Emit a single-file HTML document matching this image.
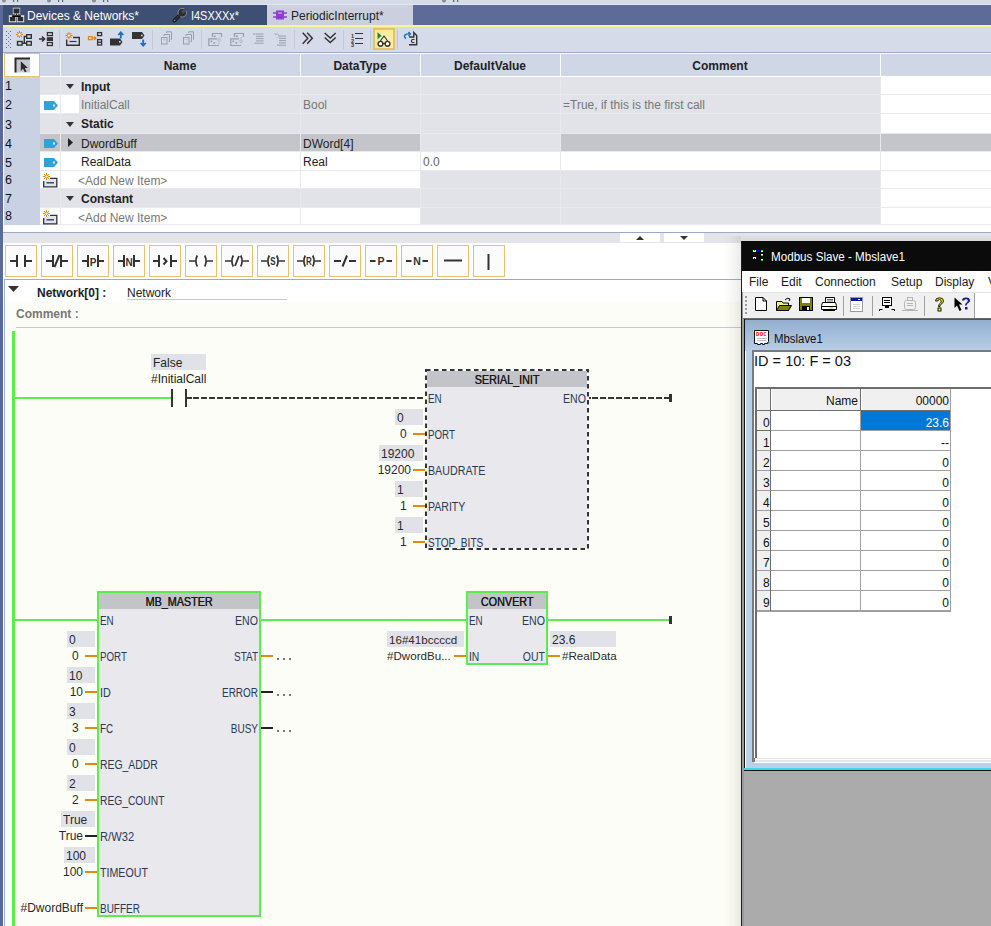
<!DOCTYPE html>
<html><head><meta charset="utf-8">
<style>
*{margin:0;padding:0;box-sizing:border-box}
html,body{width:991px;height:926px;overflow:hidden;background:#fdfdf7;font-family:"Liberation Sans",sans-serif;font-size:12px;color:#222;position:relative}
.a{position:absolute}
.t{position:absolute;white-space:nowrap}
svg{position:absolute;overflow:visible}
</style></head><body>
<div class="a" style="left:0px;top:0px;width:991px;height:5px;background:#d6dbe8;"></div>
<div class="a" style="left:3px;top:5px;width:988px;height:20px;background:#5d6b98;"></div>
<div class="a" style="left:3px;top:5px;width:264px;height:20px;background:#3d5073;"></div>
<div class="a" style="left:267px;top:5px;width:146px;height:20px;background:#ccd0de;"></div>
<div class="a" style="left:3px;top:25px;width:988px;height:2px;background:#fbf29a;"></div>
<div class="t" style="left:27px;top:8.84px;font-size:12px;line-height:14px;color:#fff;">Devices &amp; Networks*</div>
<div class="t" style="left:191px;top:8.84px;font-size:12px;line-height:14px;color:#fff;transform:scaleX(0.91);transform-origin:left center;">I4SXXXx*</div>
<div class="t" style="left:291px;top:8.84px;font-size:12px;line-height:14px;color:#222;">PeriodicInterrupt*</div>
<div class="a" style="left:3px;top:27px;width:988px;height:25px;background:#d6dbe9;"></div>
<div class="a" style="left:3px;top:52px;width:988px;height:1px;background:#9ea8c6;"></div>
<svg style="left:2px;top:0px" width="20" height="3" viewBox="0 0 20 3"><ellipse cx="2" cy="0.8" rx="2" ry="1.6" fill="#8a8d95"/><rect x="11" y="0" width="1.2" height="2" fill="#5a6480"/><rect x="15" y="0" width="1.2" height="2" fill="#5a6480"/></svg>
<svg style="left:47px;top:0px" width="20" height="3" viewBox="0 0 20 3"><ellipse cx="2" cy="0.8" rx="2" ry="1.6" fill="#8a8d95"/><rect x="11" y="0" width="1.2" height="2" fill="#5a6480"/><rect x="15" y="0" width="1.2" height="2" fill="#5a6480"/></svg>
<svg style="left:92px;top:0px" width="20" height="3" viewBox="0 0 20 3"><ellipse cx="2" cy="0.8" rx="2" ry="1.6" fill="#8a8d95"/><rect x="11" y="0" width="1.2" height="2" fill="#5a6480"/><rect x="15" y="0" width="1.2" height="2" fill="#5a6480"/></svg>
<svg style="left:442px;top:0px" width="20" height="3" viewBox="0 0 20 3"><ellipse cx="2" cy="0.8" rx="2" ry="1.6" fill="#8a8d95"/><rect x="11" y="0" width="1.2" height="2" fill="#5a6480"/><rect x="15" y="0" width="1.2" height="2" fill="#5a6480"/></svg>
<div class="a" style="left:0px;top:4px;width:991px;height:1px;background:#e2e6f0;"></div>
<svg style="left:9px;top:8px" width="15" height="14" viewBox="0 0 15 14"><path d="M4.5 0.5H10.5V5.5H8V8H14.5V13.5H8.5V8.5H6.5V13.5H0.5V8H7V5.5H4.5Z" fill="none" stroke="#e8eaf2" stroke-width="1.3"/><rect x="4.5" y="0.5" width="6" height="5" fill="#2d2d2d"/><rect x="0.8" y="9" width="5.5" height="4.3" fill="#2d2d2d"/><rect x="8.7" y="9" width="5.5" height="4.3" fill="#2d2d2d"/><path d="M7.5 5.5V8M3.5 9V7.5H11.5V9" stroke="#2d2d2d" stroke-width="1"/></svg>
<svg style="left:172px;top:8px" width="15" height="15" viewBox="0 0 15 15"><path d="M2.3 12.7L8 7" stroke="#111" stroke-width="3.6" stroke-linecap="round"/><circle cx="10.3" cy="4.7" r="4.3" fill="#2e2e2e" stroke="#bbb" stroke-width="0.6"/><path d="M2.3 12.7L8 7" stroke="#2e2e2e" stroke-width="2.6" stroke-linecap="round"/><path d="M10.3 4.7L14.5 0.5" stroke="#3d5073" stroke-width="3"/><circle cx="2.6" cy="12.4" r="0.7" fill="#888"/></svg>
<svg style="left:273px;top:10px" width="14" height="10" viewBox="0 0 14 10"><rect x="3" y="0.5" width="8" height="9" fill="#8a3fd1"/><path d="M0 3H3M0 7H3M11 3H14M11 7H14" stroke="#8a3fd1" stroke-width="1.5"/><path d="M5 3H9" stroke="#d8c0f2" stroke-width="1"/></svg>
<div class="a" style="left:6px;top:31px;width:1px;height:1px;background:#5d6f90;"></div>
<div class="a" style="left:10px;top:31px;width:1px;height:1px;background:#5d6f90;"></div>
<div class="a" style="left:6px;top:35px;width:1px;height:1px;background:#5d6f90;"></div>
<div class="a" style="left:10px;top:35px;width:1px;height:1px;background:#5d6f90;"></div>
<div class="a" style="left:6px;top:39px;width:1px;height:1px;background:#5d6f90;"></div>
<div class="a" style="left:10px;top:39px;width:1px;height:1px;background:#5d6f90;"></div>
<div class="a" style="left:6px;top:43px;width:1px;height:1px;background:#5d6f90;"></div>
<div class="a" style="left:10px;top:43px;width:1px;height:1px;background:#5d6f90;"></div>
<div class="a" style="left:6px;top:47px;width:1px;height:1px;background:#5d6f90;"></div>
<div class="a" style="left:10px;top:47px;width:1px;height:1px;background:#5d6f90;"></div>
<div class="a" style="left:8px;top:33px;width:1px;height:1px;background:#5d6f90;"></div>
<div class="a" style="left:8px;top:37px;width:1px;height:1px;background:#5d6f90;"></div>
<div class="a" style="left:8px;top:41px;width:1px;height:1px;background:#5d6f90;"></div>
<div class="a" style="left:8px;top:45px;width:1px;height:1px;background:#5d6f90;"></div>
<svg style="left:15px;top:31px" width="18" height="16" viewBox="0 0 18 16"><g stroke="#d9870f" stroke-width="1"><path d="M4.5 0.0V7.0M1.0 3.5H8.0M2.0 1.0L7.0 6.0M7.0 1.0L2.0 6.0"/></g><circle cx="4.5" cy="3.5" r="1.7" fill="#fff" stroke="#d9870f" stroke-width="1"/><g fill="none" stroke="#333" stroke-width="1.4"><rect x="11.7" y="3.7" width="4.6" height="3.6"/><rect x="2.5" y="10.5" width="4.6" height="3.6"/><rect x="11.7" y="10.5" width="4.6" height="3.6"/><path d="M7 12.3H9.3V5.5H11.7M9.3 12.3H11.7"/></g></svg>
<svg style="left:38px;top:31px" width="16" height="16" viewBox="0 0 16 16"><path d="M1 8H6M4 5.5L6.5 8L4 10.5" fill="none" stroke="#333" stroke-width="1.6"/><g fill="none" stroke="#333" stroke-width="1.3"><rect x="9.4" y="1.6" width="5" height="3"/><rect x="9.4" y="11.5" width="5" height="3"/></g><rect x="8.8" y="6.2" width="6.2" height="3.8" fill="#333"/></svg>
<div class="a" style="left:59px;top:30px;width:1px;height:19px;background:#c2c8d8;"></div>
<svg style="left:65px;top:31px" width="16" height="16" viewBox="0 0 16 16"><g stroke="#d9870f" stroke-width="1"><path d="M4 1.0V8.0M0.5 4.5H7.5M1.5 2.0L6.5 7.0M6.5 2.0L1.5 7.0"/></g><circle cx="4" cy="4.5" r="1.7" fill="#fff" stroke="#d9870f" stroke-width="1"/><path d="M8 6.5H14.3V14.3H1.7V8.5" fill="none" stroke="#333" stroke-width="1.4"/><path d="M4.5 10.5H11.5" stroke="#333" stroke-width="1.2"/></svg>
<svg style="left:87px;top:31px" width="16" height="16" viewBox="0 0 16 16"><rect x="1.5" y="5.7" width="3.6" height="3" fill="none" stroke="#d9870f" stroke-width="1.2"/><path d="M5 7.2H8M7 5.5L9 7.2L7 9" fill="none" stroke="#d9870f" stroke-width="1.2"/><g fill="none" stroke="#333" stroke-width="1.3"><rect x="10.6" y="1.6" width="4" height="3"/><rect x="10.6" y="8.6" width="4" height="5.4"/><path d="M10.6 11.3H14.6"/></g></svg>
<svg style="left:109px;top:31px" width="17" height="16" viewBox="0 0 17 16"><path d="M1 7.5H11L13.5 11L11 14.5H1Z" fill="#333"/><rect x="10" y="10" width="1.6" height="1.6" fill="#ddd"/><path d="M11.8 7.5V1.5M9.3 4L11.8 1.3L14.3 4" fill="none" stroke="#1d6fc0" stroke-width="1.8"/></svg>
<svg style="left:131px;top:31px" width="17" height="16" viewBox="0 0 17 16"><path d="M1 1H11L13.5 4.5L11 8H1Z" fill="#333"/><rect x="10" y="3.7" width="1.6" height="1.6" fill="#ddd"/><path d="M12.2 8.5V14.5M9.7 12L12.2 14.7L14.7 12" fill="none" stroke="#1d6fc0" stroke-width="1.8"/></svg>
<div class="a" style="left:152px;top:30px;width:1px;height:19px;background:#c2c8d8;"></div>
<svg style="left:160px;top:31px" width="13" height="14" viewBox="0 0 13 14"><g fill="none" stroke="#9a9ea8" stroke-width="1"><rect x="1.5" y="6.5" width="5.5" height="6.5"/><path d="M4 5V3.5H9.5V10.5H8.5M6.5 2V0.8H11.5V8.5H11"/></g><path d="M4.25 7V10M2.75 8.5H5.75" stroke="#c0c3ca" stroke-width="1"/></svg>
<svg style="left:182px;top:31px" width="13" height="14" viewBox="0 0 13 14"><g fill="none" stroke="#9a9ea8" stroke-width="1"><rect x="1.5" y="6.5" width="5.5" height="6.5"/><path d="M4 5V3.5H9.5V10.5H8.5M6.5 2V0.8H11.5V8.5H11"/></g><path d="M2.75 8.5H5.75" stroke="#c0c3ca" stroke-width="1"/></svg>
<div class="a" style="left:201px;top:30px;width:1px;height:19px;background:#c2c8d8;"></div>
<svg style="left:208px;top:32px" width="15" height="14" viewBox="0 0 15 14"><g fill="none" stroke="#9a9ea8" stroke-width="1.2"><path d="M4.5 5V1.5H13.5V5M11 13.5H0.8V6.8H9"/><path d="M4.5 5V1.5"/></g><rect x="6" y="3.5" width="1.7" height="1.7" fill="#9a9ea8"/><rect x="2.5" y="8.5" width="1.7" height="1.7" fill="#9a9ea8"/><rect x="5.5" y="10" width="1.7" height="1.7" fill="#9a9ea8"/><path d="M11 12V6.5M9 8.5L11 6.2L13 8.5" fill="none" stroke="#c2c5cc" stroke-width="1.6"/></svg>
<svg style="left:230px;top:32px" width="15" height="14" viewBox="0 0 15 14"><g fill="none" stroke="#9a9ea8" stroke-width="1.2"><path d="M4.5 5V1.5H13.5V5M11 13.5H0.8V6.8H9"/><path d="M4.5 5V1.5"/></g><rect x="6" y="3.5" width="1.7" height="1.7" fill="#9a9ea8"/><rect x="2.5" y="8.5" width="1.7" height="1.7" fill="#9a9ea8"/><rect x="5.5" y="10" width="1.7" height="1.7" fill="#9a9ea8"/><path d="M11 5V10.5M9 8.5L11 10.8L13 8.5" fill="none" stroke="#c2c5cc" stroke-width="1.6"/></svg>
<svg style="left:253px;top:33px" width="12" height="13" viewBox="0 0 12 13"><path d="M0 1H2.5M3 1H10.5M3 3.3H10.5M3 5.6H10.5M3 7.9H10.5M1.5 10.2H10.5" stroke="#9a9ea8" stroke-width="1"/></svg>
<svg style="left:274px;top:33px" width="13" height="14" viewBox="0 0 13 14"><path d="M3 5.5Q5.5 3.5 4.5 1.5Q3 0 1 1.5M1 1.5L0.8 0M1 1.5L2.5 1.8" fill="none" stroke="#b0b3ba" stroke-width="1"/><path d="M5 3H12M5 5.3H12M5 7.6H12M5 9.9H12M3 12.2H12" stroke="#9a9ea8" stroke-width="1"/></svg>
<div class="a" style="left:294px;top:30px;width:1px;height:19px;background:#c2c8d8;"></div>
<svg style="left:302px;top:32px" width="12" height="13" viewBox="0 0 12 13"><path d="M0.7 0.7L5.8 6.2L0.7 11.7M5.2 0.7L10.3 6.2L5.2 11.7" fill="none" stroke="#333" stroke-width="1.5"/></svg>
<svg style="left:324px;top:32px" width="13" height="13" viewBox="0 0 13 13"><path d="M0.7 1L6.2 6L11.7 1M0.7 5.5L6.2 10.5L11.7 5.5" fill="none" stroke="#333" stroke-width="1.5"/></svg>
<div class="a" style="left:343px;top:30px;width:1px;height:19px;background:#c2c8d8;"></div>
<svg style="left:350px;top:32px" width="14" height="15" viewBox="0 0 14 15"><text x="2.5" y="5.5" font-size="5.5" font-weight="bold" text-anchor="middle" fill="#333" font-family="Liberation Sans">1</text><text x="2.5" y="10.5" font-size="5.5" font-weight="bold" text-anchor="middle" fill="#333" font-family="Liberation Sans">2</text><text x="2.5" y="15" font-size="5.5" font-weight="bold" text-anchor="middle" fill="#333" font-family="Liberation Sans">3</text><path d="M5 1.5H13M5 6.5H13M5 11.5H13" stroke="#333" stroke-width="1.2"/></svg>
<div class="a" style="left:370px;top:30px;width:1px;height:19px;background:#c2c8d8;"></div>
<div class="a" style="left:373px;top:28px;width:22px;height:22px;background:#fdeb9e;border:2px solid #e6c261"></div>
<svg style="left:376px;top:31px" width="16" height="16" viewBox="0 0 16 16"><path d="M1.5 1V8.5L6 4.75Z" fill="#1f8a2a"/><path d="M1.5 1L6 4.75L1.5 8.5" fill="none" stroke="#fff" stroke-width=".6" opacity=".6"/><path d="M2.5 12.5L8 4.5L13.5 12.5" fill="none" stroke="#fff" stroke-width="2.2"/><path d="M2.5 12.5L8 5L13.5 12.5" fill="none" stroke="#333" stroke-width="1.2"/><circle cx="4.5" cy="12.8" r="2.4" fill="#fff" stroke="#333" stroke-width="1.4"/><circle cx="11.5" cy="12.8" r="2.4" fill="#fff" stroke="#333" stroke-width="1.4"/><path d="M6.9 12.5H9.1" stroke="#333" stroke-width="1.2"/></svg>
<div class="a" style="left:397px;top:30px;width:1px;height:19px;background:#c2c8d8;"></div>
<svg style="left:403px;top:31px" width="15" height="15" viewBox="0 0 15 15"><path d="M6 13.7H13.7V4.5L10.8 1.5V6H6" fill="none" stroke="#333" stroke-width="1.4"/><path d="M11.5 8.5H9.5Q8.5 8.5 8.5 10Q8.5 11.5 9.5 11.5H11.5" fill="none" stroke="#333" stroke-width="1.2"/><path d="M3 7.5Q0.5 6 2 4Q3.5 2.5 7 3M5.5 1L7.3 3L5.5 5" fill="none" stroke="#1d6fc0" stroke-width="1.5"/></svg>
<div class="a" style="left:3px;top:53px;width:988px;height:179px;background:#ffffff;"></div>
<div class="a" style="left:40px;top:77px;width:951px;height:148px;background:#e8e9ee;"></div>
<div class="a" style="left:4px;top:53px;width:36px;height:24px;background:#ffffff;border:1px solid #e8c36a"></div>
<div class="a" style="left:40px;top:54px;width:20px;height:22px;background:#cfd6e6;"></div>
<div class="a" style="left:61px;top:54px;width:239px;height:22px;background:#cfd6e6;"></div>
<div class="a" style="left:301px;top:54px;width:119px;height:22px;background:#cfd6e6;"></div>
<div class="a" style="left:421px;top:54px;width:139px;height:22px;background:#cfd6e6;"></div>
<div class="a" style="left:561px;top:54px;width:319px;height:22px;background:#cfd6e6;"></div>
<div class="a" style="left:881px;top:54px;width:110px;height:22px;background:#cfd6e6;"></div>
<svg style="left:14px;top:57px" width="17" height="16" viewBox="0 0 17 16"><rect x="2" y="2" width="14" height="13.5" fill="#c5c8d2"/><path d="M1.5 15.5V1.5H16" fill="none" stroke="#2a2a2a" stroke-width="2"/><path d="M6.8 4.3L6.8 14L9 11.8L10.9 15.2L12.6 14.4L10.8 11H14Z" fill="#2a2a2a"/></svg>
<div class="t" style="left:-20px;width:400px;text-align:center;top:58.84px;font-size:12px;line-height:14px;color:#222;font-weight:bold;">Name</div>
<div class="t" style="left:160px;width:400px;text-align:center;top:58.84px;font-size:12px;line-height:14px;color:#222;font-weight:bold;">DataType</div>
<div class="t" style="left:290px;width:400px;text-align:center;top:58.84px;font-size:12px;line-height:14px;color:#222;font-weight:bold;">DefaultValue</div>
<div class="t" style="left:520px;width:400px;text-align:center;top:58.84px;font-size:12px;line-height:14px;color:#222;font-weight:bold;">Comment</div>
<div class="a" style="left:4px;top:77px;width:36px;height:148px;background:#c9d2e3;"></div>
<div class="a" style="left:40px;top:77px;width:20px;height:17px;background:#e1e3e8;"></div>
<div class="a" style="left:61px;top:77px;width:239px;height:17px;background:#e1e3e8;"></div>
<div class="a" style="left:301px;top:77px;width:119px;height:17px;background:#e1e3e8;"></div>
<div class="a" style="left:421px;top:77px;width:139px;height:17px;background:#e1e3e8;"></div>
<div class="a" style="left:561px;top:77px;width:319px;height:17px;background:#e1e3e8;"></div>
<div class="a" style="left:881px;top:77px;width:110px;height:17px;background:#ffffff;"></div>
<div class="t" style="left:5px;top:79.17px;font-size:12.5px;line-height:15px;color:#111;">1</div>
<div class="a" style="left:40px;top:95px;width:20px;height:18px;background:#ffffff;"></div>
<div class="a" style="left:61px;top:95px;width:239px;height:18px;background:#e1e3e8;"></div>
<div class="a" style="left:301px;top:95px;width:119px;height:18px;background:#e1e3e8;"></div>
<div class="a" style="left:421px;top:95px;width:139px;height:18px;background:#e1e3e8;"></div>
<div class="a" style="left:561px;top:95px;width:319px;height:18px;background:#e1e3e8;"></div>
<div class="a" style="left:881px;top:95px;width:110px;height:18px;background:#ffffff;"></div>
<div class="t" style="left:5px;top:98.17px;font-size:12.5px;line-height:15px;color:#111;">2</div>
<div class="a" style="left:40px;top:114px;width:20px;height:19px;background:#e1e3e8;"></div>
<div class="a" style="left:61px;top:114px;width:239px;height:19px;background:#e1e3e8;"></div>
<div class="a" style="left:301px;top:114px;width:119px;height:19px;background:#e1e3e8;"></div>
<div class="a" style="left:421px;top:114px;width:139px;height:19px;background:#e1e3e8;"></div>
<div class="a" style="left:561px;top:114px;width:319px;height:19px;background:#e1e3e8;"></div>
<div class="a" style="left:881px;top:114px;width:110px;height:19px;background:#ffffff;"></div>
<div class="t" style="left:5px;top:118.17px;font-size:12.5px;line-height:15px;color:#111;">3</div>
<div class="a" style="left:40px;top:134px;width:20px;height:17px;background:#c3c5ca;"></div>
<div class="a" style="left:61px;top:134px;width:239px;height:17px;background:#c3c5ca;"></div>
<div class="a" style="left:301px;top:134px;width:119px;height:17px;background:#c3c5ca;"></div>
<div class="a" style="left:421px;top:134px;width:139px;height:17px;background:#e1e3e8;"></div>
<div class="a" style="left:561px;top:134px;width:319px;height:17px;background:#c3c5ca;"></div>
<div class="a" style="left:881px;top:134px;width:110px;height:17px;background:#c3c5ca;"></div>
<div class="t" style="left:5px;top:137.17px;font-size:12.5px;line-height:15px;color:#111;">4</div>
<div class="a" style="left:40px;top:152px;width:20px;height:18px;background:#ffffff;"></div>
<div class="a" style="left:61px;top:152px;width:239px;height:18px;background:#ffffff;"></div>
<div class="a" style="left:301px;top:152px;width:119px;height:18px;background:#ffffff;"></div>
<div class="a" style="left:421px;top:152px;width:139px;height:18px;background:#ffffff;"></div>
<div class="a" style="left:561px;top:152px;width:319px;height:18px;background:#ffffff;"></div>
<div class="a" style="left:881px;top:152px;width:110px;height:18px;background:#ffffff;"></div>
<div class="t" style="left:5px;top:156.17px;font-size:12.5px;line-height:15px;color:#111;">5</div>
<div class="a" style="left:40px;top:171px;width:20px;height:17px;background:#ffffff;"></div>
<div class="a" style="left:61px;top:171px;width:239px;height:17px;background:#ffffff;"></div>
<div class="a" style="left:301px;top:171px;width:119px;height:17px;background:#ffffff;"></div>
<div class="a" style="left:421px;top:171px;width:139px;height:17px;background:#e1e3e8;"></div>
<div class="a" style="left:561px;top:171px;width:319px;height:17px;background:#e1e3e8;"></div>
<div class="a" style="left:881px;top:171px;width:110px;height:17px;background:#ffffff;"></div>
<div class="t" style="left:5px;top:173.17px;font-size:12.5px;line-height:15px;color:#111;">6</div>
<div class="a" style="left:40px;top:189px;width:20px;height:18px;background:#e1e3e8;"></div>
<div class="a" style="left:61px;top:189px;width:239px;height:18px;background:#e1e3e8;"></div>
<div class="a" style="left:301px;top:189px;width:119px;height:18px;background:#e1e3e8;"></div>
<div class="a" style="left:421px;top:189px;width:139px;height:18px;background:#e1e3e8;"></div>
<div class="a" style="left:561px;top:189px;width:319px;height:18px;background:#e1e3e8;"></div>
<div class="a" style="left:881px;top:189px;width:110px;height:18px;background:#ffffff;"></div>
<div class="t" style="left:5px;top:192.17px;font-size:12.5px;line-height:15px;color:#111;">7</div>
<div class="a" style="left:40px;top:208px;width:20px;height:16px;background:#ffffff;"></div>
<div class="a" style="left:61px;top:208px;width:239px;height:16px;background:#ffffff;"></div>
<div class="a" style="left:301px;top:208px;width:119px;height:16px;background:#ffffff;"></div>
<div class="a" style="left:421px;top:208px;width:139px;height:16px;background:#e1e3e8;"></div>
<div class="a" style="left:561px;top:208px;width:319px;height:16px;background:#e1e3e8;"></div>
<div class="a" style="left:881px;top:208px;width:110px;height:16px;background:#ffffff;"></div>
<div class="t" style="left:5px;top:209.17px;font-size:12.5px;line-height:15px;color:#111;">8</div>
<div class="a" style="left:61px;top:95px;width:18px;height:18px;background:#ffffff;"></div>
<svg style="left:66px;top:84px" width="8" height="5" viewBox="0 0 8 5"><path d="M0 0H8L4 5Z" fill="#333"/></svg>
<div class="t" style="left:81px;top:79.84px;font-size:12px;line-height:14px;color:#222;font-weight:bold;">Input</div>
<svg style="left:44px;top:101px" width="14" height="9" viewBox="0 0 14 9"><path d="M0 0H10L14 4.5L10 9H0Z" fill="#2ea3da"/><rect x="9" y="3.5" width="2" height="2" fill="#fff" opacity=".8"/></svg>
<div class="t" style="left:81px;top:97.84px;font-size:12px;line-height:14px;color:#777;">InitialCall</div>
<div class="t" style="left:303px;top:97.84px;font-size:12px;line-height:14px;color:#777;">Bool</div>
<div class="t" style="left:563px;top:97.84px;font-size:12px;line-height:14px;color:#777;">=True, if this is the first call</div>
<svg style="left:66px;top:122px" width="8" height="5" viewBox="0 0 8 5"><path d="M0 0H8L4 5Z" fill="#333"/></svg>
<div class="t" style="left:81px;top:116.84px;font-size:12px;line-height:14px;color:#222;font-weight:bold;">Static</div>
<svg style="left:44px;top:139px" width="14" height="9" viewBox="0 0 14 9"><path d="M0 0H10L14 4.5L10 9H0Z" fill="#2ea3da"/><rect x="9" y="3.5" width="2" height="2" fill="#fff" opacity=".8"/></svg>
<svg style="left:68px;top:138px" width="5" height="9" viewBox="0 0 5 9"><path d="M0 0V9L5 4.5Z" fill="#222"/></svg>
<div class="t" style="left:81px;top:136.84px;font-size:12px;line-height:14px;color:#222;">DwordBuff</div>
<div class="t" style="left:303px;top:136.84px;font-size:12px;line-height:14px;color:#222;">DWord[4]</div>
<svg style="left:44px;top:158px" width="14" height="9" viewBox="0 0 14 9"><path d="M0 0H10L14 4.5L10 9H0Z" fill="#2ea3da"/><rect x="9" y="3.5" width="2" height="2" fill="#fff" opacity=".8"/></svg>
<div class="t" style="left:81px;top:154.84px;font-size:12px;line-height:14px;color:#222;">RealData</div>
<div class="t" style="left:303px;top:154.84px;font-size:12px;line-height:14px;color:#222;">Real</div>
<div class="t" style="left:423px;top:154.84px;font-size:12px;line-height:14px;color:#666;">0.0</div>
<svg style="left:43px;top:173px" width="15" height="15" viewBox="0 0 15 15"><path d="M0.7 8V13.8H13.8V5.3H7" fill="#dfe4f0" stroke="#333" stroke-width="1.3"/><g stroke="#d98a14" stroke-width="1"><path d="M3.5 0V7M0 3.5H7M1 1L6 6M6 1L1 6"/></g><circle cx="3.5" cy="3.5" r="1.6" fill="#fff" stroke="#d98a14" stroke-width="1"/><path d="M3.5 9.8H11" stroke="#333" stroke-width="1.3"/></svg>
<div class="t" style="left:78px;top:173.84px;font-size:12px;line-height:14px;color:#777;">&lt;Add New Item&gt;</div>
<svg style="left:66px;top:196px" width="8" height="5" viewBox="0 0 8 5"><path d="M0 0H8L4 5Z" fill="#333"/></svg>
<div class="t" style="left:81px;top:191.84px;font-size:12px;line-height:14px;color:#222;font-weight:bold;">Constant</div>
<svg style="left:43px;top:210px" width="15" height="15" viewBox="0 0 15 15"><path d="M0.7 8V13.8H13.8V5.3H7" fill="#dfe4f0" stroke="#333" stroke-width="1.3"/><g stroke="#d98a14" stroke-width="1"><path d="M3.5 0V7M0 3.5H7M1 1L6 6M6 1L1 6"/></g><circle cx="3.5" cy="3.5" r="1.6" fill="#fff" stroke="#d98a14" stroke-width="1"/><path d="M3.5 9.8H11" stroke="#333" stroke-width="1.3"/></svg>
<div class="t" style="left:78px;top:210.84px;font-size:12px;line-height:14px;color:#777;">&lt;Add New Item&gt;</div>
<div class="a" style="left:3px;top:232px;width:988px;height:1px;background:#9ea8c6;"></div>
<div class="a" style="left:3px;top:233px;width:988px;height:10px;background:#e3e5ea;"></div>
<div class="a" style="left:620px;top:233px;width:40px;height:9px;background:#fff;"></div>
<svg style="left:636px;top:236px" width="8" height="4" viewBox="0 0 8 4"><path d="M0 4H8L4 0Z" fill="#333"/></svg>
<div class="a" style="left:664px;top:233px;width:40px;height:9px;background:#fff;"></div>
<svg style="left:680px;top:236px" width="8" height="4" viewBox="0 0 8 4"><path d="M0 0H8L4 4Z" fill="#333"/></svg>
<div class="a" style="left:3px;top:243px;width:988px;height:37px;background:#ffffff;"></div>
<div class="a" style="left:5px;top:245px;width:32px;height:32px;background:#fbfbfb;border:1px solid #e6c170"></div>
<div class="a" style="left:41px;top:245px;width:32px;height:32px;background:#fbfbfb;border:1px solid #e6c170"></div>
<div class="a" style="left:77px;top:245px;width:32px;height:32px;background:#fbfbfb;border:1px solid #e6c170"></div>
<div class="a" style="left:113px;top:245px;width:32px;height:32px;background:#fbfbfb;border:1px solid #e6c170"></div>
<div class="a" style="left:149px;top:245px;width:32px;height:32px;background:#fbfbfb;border:1px solid #e6c170"></div>
<div class="a" style="left:185px;top:245px;width:32px;height:32px;background:#fbfbfb;border:1px solid #e6c170"></div>
<div class="a" style="left:221px;top:245px;width:32px;height:32px;background:#fbfbfb;border:1px solid #e6c170"></div>
<div class="a" style="left:257px;top:245px;width:32px;height:32px;background:#fbfbfb;border:1px solid #e6c170"></div>
<div class="a" style="left:293px;top:245px;width:32px;height:32px;background:#fbfbfb;border:1px solid #e6c170"></div>
<div class="a" style="left:329px;top:245px;width:32px;height:32px;background:#fbfbfb;border:1px solid #e6c170"></div>
<div class="a" style="left:365px;top:245px;width:32px;height:32px;background:#fbfbfb;border:1px solid #e6c170"></div>
<div class="a" style="left:401px;top:245px;width:32px;height:32px;background:#fbfbfb;border:1px solid #e6c170"></div>
<div class="a" style="left:437px;top:245px;width:32px;height:32px;background:#fbfbfb;border:1px solid #e6c170"></div>
<div class="a" style="left:473px;top:245px;width:32px;height:32px;background:#fbfbfb;border:1px solid #e6c170"></div>
<div class="a" style="left:4px;top:279px;width:987px;height:1px;background:#9ea8c6;"></div>
<div class="a" style="left:4px;top:280px;width:987px;height:646px;background:#fdfdf7;"></div>
<div class="a" style="left:4px;top:280px;width:1px;height:646px;background:#a8b0d0;"></div>
<div class="a" style="left:5px;top:280px;width:986px;height:22px;background:#ffffff;"></div>
<svg style="left:8px;top:286px" width="11" height="6" viewBox="0 0 11 6"><path d="M0 0H11L5.5 6Z" fill="#333"/></svg>
<div class="t" style="left:37px;top:285.84px;font-size:12px;line-height:14px;color:#222;font-weight:bold;">Network[0] :</div>
<div class="t" style="left:127px;top:285.84px;font-size:12px;line-height:14px;color:#222;">Network</div>
<div class="a" style="left:127px;top:299px;width:160px;height:1px;background:#c8c8c8;"></div>
<div class="t" style="left:16px;top:306.84px;font-size:12px;line-height:14px;color:#777;font-weight:bold;">Comment :</div>
<div class="a" style="left:16px;top:327px;width:975px;height:1px;background:#c3c9dc;"></div>
<div class="a" style="left:12px;top:331px;width:3px;height:595px;background:#5cec4e;"></div>
<svg style="left:5px;top:245px" width="32" height="32" viewBox="0 0 32 32"><path d="M5 16H11M12 10V22M20 10V22M20 16H27" stroke="#333" stroke-width="2" fill="none"/></svg>
<svg style="left:41px;top:245px" width="32" height="32" viewBox="0 0 32 32"><path d="M5 16H11M12 10V22M20 10V22M20 16H27" stroke="#333" stroke-width="2" fill="none"/><path d="M13.5 22L18.5 10" stroke="#333" stroke-width="2" fill="none"/></svg>
<svg style="left:77px;top:245px" width="32" height="32" viewBox="0 0 32 32"><path d="M5 16H10M11 10V22M21 10V22M21 16H27" stroke="#333" stroke-width="2" fill="none"/><text x="16" y="20.5" font-size="10" font-weight="bold" text-anchor="middle" fill="#333" font-family="Liberation Sans">P</text></svg>
<svg style="left:113px;top:245px" width="32" height="32" viewBox="0 0 32 32"><path d="M5 16H10M11 10V22M21 10V22M21 16H27" stroke="#333" stroke-width="2" fill="none"/><text x="16" y="20.5" font-size="10" font-weight="bold" text-anchor="middle" fill="#333" font-family="Liberation Sans">N</text></svg>
<svg style="left:149px;top:245px" width="32" height="32" viewBox="0 0 32 32"><path d="M4 16H10M10 10V22M22 10V22M22 16H28M14.5 13L17.5 16.2L14.5 19.5" stroke="#333" stroke-width="2" fill="none"/></svg>
<svg style="left:185px;top:245px" width="32" height="32" viewBox="0 0 32 32"><path d="M4 16H10M12.3 10.5Q9.5 16 12.3 21.5M19.7 10.5Q22.5 16 19.7 21.5M22 16H28" stroke="#333" stroke-width="1.7" fill="none"/></svg>
<svg style="left:221px;top:245px" width="32" height="32" viewBox="0 0 32 32"><path d="M4 16H10M12.3 10.5Q9.5 16 12.3 21.5M19.7 10.5Q22.5 16 19.7 21.5M22 16H28" stroke="#333" stroke-width="1.7" fill="none"/><path d="M14 21L18 11" stroke="#333" stroke-width="1.8"/></svg>
<svg style="left:257px;top:245px" width="32" height="32" viewBox="0 0 32 32"><path d="M4 16H10M12.3 10.5Q9.5 16 12.3 21.5M19.7 10.5Q22.5 16 19.7 21.5M22 16H28" stroke="#333" stroke-width="1.7" fill="none"/><text x="16" y="20.3" font-size="10" font-weight="bold" text-anchor="middle" fill="#333" font-family="Liberation Sans" transform="translate(16 0) scale(0.8 1) translate(-16 0)">S</text></svg>
<svg style="left:293px;top:245px" width="32" height="32" viewBox="0 0 32 32"><path d="M4 16H10M12.3 10.5Q9.5 16 12.3 21.5M19.7 10.5Q22.5 16 19.7 21.5M22 16H28" stroke="#333" stroke-width="1.7" fill="none"/><text x="16" y="20.3" font-size="10" font-weight="bold" text-anchor="middle" fill="#333" font-family="Liberation Sans" transform="translate(16 0) scale(0.8 1) translate(-16 0)">R</text></svg>
<svg style="left:329px;top:245px" width="32" height="32" viewBox="0 0 32 32"><path d="M5 16H12M20 16H27M13.5 21.5L18 10.5" stroke="#333" stroke-width="2" fill="none"/></svg>
<svg style="left:365px;top:245px" width="32" height="32" viewBox="0 0 32 32"><path d="M5 16H10.5M21.5 16H27" stroke="#333" stroke-width="2" fill="none"/><text x="16" y="20.3" font-size="10.5" font-weight="bold" text-anchor="middle" fill="#333" font-family="Liberation Sans">P</text></svg>
<svg style="left:401px;top:245px" width="32" height="32" viewBox="0 0 32 32"><path d="M5 16H10.5M21.5 16H27" stroke="#333" stroke-width="2" fill="none"/><text x="16" y="20.3" font-size="10.5" font-weight="bold" text-anchor="middle" fill="#333" font-family="Liberation Sans">N</text></svg>
<svg style="left:437px;top:245px" width="32" height="32" viewBox="0 0 32 32"><path d="M7 15.5H25" stroke="#333" stroke-width="2" fill="none"/></svg>
<svg style="left:473px;top:245px" width="32" height="32" viewBox="0 0 32 32"><path d="M15.5 9V25" stroke="#333" stroke-width="2" fill="none"/></svg>
<div class="a" style="left:151px;top:354px;width:55px;height:16px;background:#e0e2e7;"></div>
<div class="t" style="left:153px;top:355.84px;font-size:12px;line-height:14px;color:#222;">False</div>
<div class="t" style="left:151px;top:371.84px;font-size:12px;line-height:14px;color:#222;">#InitialCall</div>
<div class="a" style="left:15px;top:397px;width:156px;height:2px;background:#5cec4e;"></div>
<div class="a" style="left:171px;top:389px;width:2px;height:18px;background:#333;"></div>
<div class="a" style="left:185px;top:389px;width:2px;height:18px;background:#333;"></div>
<div class="a" style="left:187px;top:397px;width:4.5px;height:2px;background:#363636;"></div>
<div class="a" style="left:192.5px;top:397px;width:232.5px;height:2px;background:repeating-linear-gradient(90deg,#363636 0 5.75px,transparent 5.75px 8px)"></div>
<div class="a" style="left:589px;top:397px;width:2px;height:2px;background:#363636;"></div>
<div class="a" style="left:592px;top:397px;width:77px;height:2px;background:repeating-linear-gradient(90deg,#363636 0 5.75px,transparent 5.75px 8px)"></div>
<div class="a" style="left:669px;top:394px;width:3px;height:8px;background:#333;"></div>
<div class="a" style="left:427px;top:371px;width:160px;height:177px;background:#e8e8ed;"></div>
<div class="a" style="left:427px;top:371px;width:160px;height:16px;background:#c3c4c9;"></div>
<svg style="left:425px;top:369px" width="164" height="181" viewBox="0 0 164 181"><rect x="1" y="1" width="162" height="179" fill="none" stroke="#333" stroke-width="2" stroke-dasharray="4.5 3.5"/></svg>
<div class="t" style="left:307.0px;width:400px;text-align:center;top:372.84px;font-size:12px;line-height:14px;color:#1a1a1a;transform:scaleX(0.9);transform-origin:center center;text-shadow:0.35px 0 0 #1a1a1a">SERIAL_INIT</div>
<div class="t" style="left:428px;top:391.84px;font-size:12px;line-height:14px;color:#2b3a55;transform:scaleX(0.82);transform-origin:left center;">EN</div>
<div class="t" style="left:186px;width:400px;text-align:right;top:391.84px;font-size:12px;line-height:14px;color:#2b3a55;transform:scaleX(0.885);transform-origin:right center;">ENO</div>
<div class="t" style="left:428px;top:427.84px;font-size:12px;line-height:14px;color:#2b3a55;transform:scaleX(0.81);transform-origin:left center;">PORT</div>
<div class="a" style="left:413px;top:433px;width:12px;height:2px;background:#e08a10;"></div>
<div class="a" style="left:395px;top:409px;width:28px;height:16px;background:#e1e2e7;"></div>
<div class="t" style="left:397px;top:410.84px;font-size:12px;line-height:14px;color:#2a2a2a;">0</div>
<div class="t" style="left:400px;top:427.34px;font-size:12px;line-height:14px;color:#2a2a2a;">0</div>
<div class="t" style="left:428px;top:463.84px;font-size:12px;line-height:14px;color:#2b3a55;transform:scaleX(0.89);transform-origin:left center;">BAUDRATE</div>
<div class="a" style="left:413px;top:469px;width:12px;height:2px;background:#e08a10;"></div>
<div class="a" style="left:379px;top:445px;width:44px;height:16px;background:#e1e2e7;"></div>
<div class="t" style="left:381px;top:446.84px;font-size:12px;line-height:14px;color:#2a2a2a;">19200</div>
<div class="t" style="left:11px;width:400px;text-align:right;top:463.34px;font-size:12px;line-height:14px;color:#2a2a2a;">19200</div>
<div class="t" style="left:428px;top:499.84px;font-size:12px;line-height:14px;color:#2b3a55;transform:scaleX(0.88);transform-origin:left center;">PARITY</div>
<div class="a" style="left:413px;top:505px;width:12px;height:2px;background:#e08a10;"></div>
<div class="a" style="left:395px;top:481px;width:28px;height:16px;background:#e1e2e7;"></div>
<div class="t" style="left:397px;top:482.84px;font-size:12px;line-height:14px;color:#2a2a2a;">1</div>
<div class="t" style="left:400px;top:499.34px;font-size:12px;line-height:14px;color:#2a2a2a;">1</div>
<div class="t" style="left:428px;top:535.84px;font-size:12px;line-height:14px;color:#2b3a55;transform:scaleX(0.84);transform-origin:left center;">STOP_BITS</div>
<div class="a" style="left:413px;top:541px;width:12px;height:2px;background:#e08a10;"></div>
<div class="a" style="left:395px;top:517px;width:28px;height:16px;background:#e1e2e7;"></div>
<div class="t" style="left:397px;top:518.84px;font-size:12px;line-height:14px;color:#2a2a2a;">1</div>
<div class="t" style="left:400px;top:535.34px;font-size:12px;line-height:14px;color:#2a2a2a;">1</div>
<div class="a" style="left:15px;top:619px;width:82px;height:2px;background:#5cec4e;"></div>
<div class="a" style="left:97px;top:591px;width:164px;height:326px;background:#e8e8ed;"></div>
<div class="a" style="left:97px;top:591px;width:164px;height:18px;background:#c3c4c9;"></div>
<div class="a" style="left:97px;top:591px;width:164px;height:326px;border:2px solid #5cec4e"></div>
<div class="t" style="left:-21.0px;width:400px;text-align:center;top:594.84px;font-size:12px;line-height:14px;color:#1a1a1a;transform:scaleX(0.9);transform-origin:center center;text-shadow:0.35px 0 0 #1a1a1a">MB_MASTER</div>
<div class="t" style="left:100px;top:613.84px;font-size:12px;line-height:14px;color:#2b3a55;transform:scaleX(0.82);transform-origin:left center;">EN</div>
<div class="t" style="left:-142px;width:400px;text-align:right;top:613.84px;font-size:12px;line-height:14px;color:#2b3a55;transform:scaleX(0.885);transform-origin:right center;">ENO</div>
<div class="a" style="left:261px;top:619px;width:205px;height:2px;background:#5cec4e;"></div>
<div class="t" style="left:100px;top:649.84px;font-size:12px;line-height:14px;color:#2b3a55;transform:scaleX(0.81);transform-origin:left center;">PORT</div>
<div class="a" style="left:85px;top:655px;width:12px;height:2px;background:#e08a10;"></div>
<div class="a" style="left:67px;top:631px;width:28px;height:16px;background:#e1e2e7;"></div>
<div class="t" style="left:69px;top:632.84px;font-size:12px;line-height:14px;color:#2a2a2a;">0</div>
<div class="t" style="left:72px;top:649.34px;font-size:12px;line-height:14px;color:#2a2a2a;">0</div>
<div class="t" style="left:100px;top:685.84px;font-size:12px;line-height:14px;color:#2b3a55;transform:scaleX(0.9);transform-origin:left center;">ID</div>
<div class="a" style="left:85px;top:691px;width:12px;height:2px;background:#e08a10;"></div>
<div class="a" style="left:67px;top:667px;width:28px;height:16px;background:#e1e2e7;"></div>
<div class="t" style="left:69px;top:668.84px;font-size:12px;line-height:14px;color:#2a2a2a;">10</div>
<div class="t" style="left:-317px;width:400px;text-align:right;top:685.34px;font-size:12px;line-height:14px;color:#2a2a2a;">10</div>
<div class="t" style="left:100px;top:721.84px;font-size:12px;line-height:14px;color:#2b3a55;transform:scaleX(0.82);transform-origin:left center;">FC</div>
<div class="a" style="left:85px;top:727px;width:12px;height:2px;background:#e08a10;"></div>
<div class="a" style="left:67px;top:703px;width:28px;height:16px;background:#e1e2e7;"></div>
<div class="t" style="left:69px;top:704.84px;font-size:12px;line-height:14px;color:#2a2a2a;">3</div>
<div class="t" style="left:72px;top:721.34px;font-size:12px;line-height:14px;color:#2a2a2a;">3</div>
<div class="t" style="left:100px;top:757.84px;font-size:12px;line-height:14px;color:#2b3a55;transform:scaleX(0.866);transform-origin:left center;">REG_ADDR</div>
<div class="a" style="left:85px;top:763px;width:12px;height:2px;background:#e08a10;"></div>
<div class="a" style="left:67px;top:739px;width:28px;height:16px;background:#e1e2e7;"></div>
<div class="t" style="left:69px;top:740.84px;font-size:12px;line-height:14px;color:#2a2a2a;">0</div>
<div class="t" style="left:72px;top:757.34px;font-size:12px;line-height:14px;color:#2a2a2a;">0</div>
<div class="t" style="left:100px;top:793.84px;font-size:12px;line-height:14px;color:#2b3a55;transform:scaleX(0.855);transform-origin:left center;">REG_COUNT</div>
<div class="a" style="left:85px;top:799px;width:12px;height:2px;background:#e08a10;"></div>
<div class="a" style="left:67px;top:775px;width:28px;height:16px;background:#e1e2e7;"></div>
<div class="t" style="left:69px;top:776.84px;font-size:12px;line-height:14px;color:#2a2a2a;">2</div>
<div class="t" style="left:72px;top:793.34px;font-size:12px;line-height:14px;color:#2a2a2a;">2</div>
<div class="t" style="left:100px;top:829.84px;font-size:12px;line-height:14px;color:#2b3a55;transform:scaleX(0.93);transform-origin:left center;">R/W32</div>
<div class="a" style="left:85px;top:835px;width:12px;height:2px;background:#222;"></div>
<div class="a" style="left:61px;top:811px;width:34px;height:16px;background:#e1e2e7;"></div>
<div class="t" style="left:63px;top:812.84px;font-size:12px;line-height:14px;color:#2a2a2a;">True</div>
<div class="t" style="left:-317px;width:400px;text-align:right;top:829.34px;font-size:12px;line-height:14px;color:#2a2a2a;">True</div>
<div class="t" style="left:100px;top:865.84px;font-size:12px;line-height:14px;color:#2b3a55;transform:scaleX(0.887);transform-origin:left center;">TIMEOUT</div>
<div class="a" style="left:85px;top:871px;width:12px;height:2px;background:#e08a10;"></div>
<div class="a" style="left:64px;top:847px;width:31px;height:16px;background:#e1e2e7;"></div>
<div class="t" style="left:66px;top:848.84px;font-size:12px;line-height:14px;color:#2a2a2a;">100</div>
<div class="t" style="left:-317px;width:400px;text-align:right;top:865.34px;font-size:12px;line-height:14px;color:#2a2a2a;">100</div>
<div class="t" style="left:100px;top:901.84px;font-size:12px;line-height:14px;color:#2b3a55;transform:scaleX(0.83);transform-origin:left center;">BUFFER</div>
<div class="a" style="left:85px;top:907px;width:12px;height:2px;background:#e08a10;"></div>
<div class="t" style="left:-317px;width:400px;text-align:right;top:901.34px;font-size:12px;line-height:14px;color:#2a2a2a;">#DwordBuff</div>
<div class="t" style="left:-142px;width:400px;text-align:right;top:649.84px;font-size:12px;line-height:14px;color:#2b3a55;transform:scaleX(0.83);transform-origin:right center;">STAT</div>
<div class="a" style="left:261px;top:655px;width:12px;height:2px;background:#e08a10;"></div>
<div class="a" style="left:277px;top:658px;width:1.5px;height:1.5px;background:#777;"></div>
<div class="a" style="left:283px;top:658px;width:1.5px;height:1.5px;background:#777;"></div>
<div class="a" style="left:289px;top:658px;width:1.5px;height:1.5px;background:#777;"></div>
<div class="t" style="left:-142px;width:400px;text-align:right;top:685.84px;font-size:12px;line-height:14px;color:#2b3a55;transform:scaleX(0.83);transform-origin:right center;">ERROR</div>
<div class="a" style="left:261px;top:691px;width:12px;height:2px;background:#222;"></div>
<div class="a" style="left:277px;top:694px;width:1.5px;height:1.5px;background:#777;"></div>
<div class="a" style="left:283px;top:694px;width:1.5px;height:1.5px;background:#777;"></div>
<div class="a" style="left:289px;top:694px;width:1.5px;height:1.5px;background:#777;"></div>
<div class="t" style="left:-142px;width:400px;text-align:right;top:721.84px;font-size:12px;line-height:14px;color:#2b3a55;transform:scaleX(0.83);transform-origin:right center;">BUSY</div>
<div class="a" style="left:261px;top:727px;width:12px;height:2px;background:#222;"></div>
<div class="a" style="left:277px;top:730px;width:1.5px;height:1.5px;background:#777;"></div>
<div class="a" style="left:283px;top:730px;width:1.5px;height:1.5px;background:#777;"></div>
<div class="a" style="left:289px;top:730px;width:1.5px;height:1.5px;background:#777;"></div>
<div class="a" style="left:466px;top:591px;width:82px;height:74px;background:#e8e8ed;"></div>
<div class="a" style="left:466px;top:591px;width:82px;height:18px;background:#c3c4c9;"></div>
<div class="a" style="left:466px;top:591px;width:82px;height:74px;border:2px solid #5cec4e"></div>
<div class="t" style="left:307.0px;width:400px;text-align:center;top:594.84px;font-size:12px;line-height:14px;color:#1a1a1a;transform:scaleX(0.9);transform-origin:center center;text-shadow:0.35px 0 0 #1a1a1a">CONVERT</div>
<div class="t" style="left:469px;top:613.84px;font-size:12px;line-height:14px;color:#2b3a55;transform:scaleX(0.82);transform-origin:left center;">EN</div>
<div class="t" style="left:145px;width:400px;text-align:right;top:613.84px;font-size:12px;line-height:14px;color:#2b3a55;transform:scaleX(0.885);transform-origin:right center;">ENO</div>
<div class="t" style="left:469px;top:649.84px;font-size:12px;line-height:14px;color:#2b3a55;transform:scaleX(0.86);transform-origin:left center;">IN</div>
<div class="t" style="left:145px;width:400px;text-align:right;top:649.84px;font-size:12px;line-height:14px;color:#2b3a55;transform:scaleX(0.873);transform-origin:right center;">OUT</div>
<div class="a" style="left:548px;top:619px;width:121px;height:2px;background:#5cec4e;"></div>
<div class="a" style="left:669px;top:616px;width:3px;height:8px;background:#333;"></div>
<div class="a" style="left:454px;top:655px;width:12px;height:2px;background:#e08a10;"></div>
<div class="a" style="left:387px;top:631px;width:77px;height:16px;background:#e1e2e7;"></div>
<div class="t" style="left:389px;top:632.98px;font-size:11.6px;line-height:14px;color:#2a2a2a;">16#41bccccd</div>
<div class="t" style="left:387px;top:648.98px;font-size:11.6px;line-height:14px;color:#2a2a2a;">#DwordBu...</div>
<div class="a" style="left:548px;top:655px;width:12px;height:2px;background:#e08a10;"></div>
<div class="a" style="left:550px;top:631px;width:66px;height:16px;background:#e1e2e7;"></div>
<div class="t" style="left:552px;top:632.84px;font-size:12px;line-height:14px;color:#2a2a2a;">23.6</div>
<div class="t" style="left:562px;top:648.98px;font-size:11.6px;line-height:14px;color:#2a2a2a;">#RealData</div>
<div class="a" style="left:724px;top:236px;width:17px;height:690px;background:linear-gradient(90deg,rgba(60,60,40,0),rgba(60,60,40,0.05) 60%,rgba(60,60,40,0.11))"></div>
<div class="a" style="left:741px;top:234px;width:250px;height:7px;background:linear-gradient(180deg,rgba(60,60,40,0),rgba(60,60,40,0.08))"></div>
<div class="a" style="left:741px;top:241px;width:250px;height:685px;background:#ababab;"></div>
<div class="a" style="left:741px;top:241px;width:1px;height:685px;background:#1e1e1e;"></div>
<div class="a" style="left:742px;top:271px;width:2px;height:655px;background:#9a9a9a;"></div>
<div class="a" style="left:744px;top:319px;width:1px;height:452px;background:#111;"></div>
<div class="a" style="left:742px;top:241px;width:249px;height:30px;background:#0b0b0b;"></div>
<div class="t" style="left:771px;top:249.84px;font-size:12px;line-height:14px;color:#fff;transform:scaleX(0.97);transform-origin:left center;">Modbus Slave - Mbslave1</div>
<div class="a" style="left:742px;top:271px;width:249px;height:21px;background:#ffffff;"></div>
<div class="t" style="left:749px;top:274.84px;font-size:12px;line-height:14px;color:#1a1a1a;">File</div>
<div class="t" style="left:781px;top:274.84px;font-size:12px;line-height:14px;color:#1a1a1a;">Edit</div>
<div class="t" style="left:815px;top:274.84px;font-size:12px;line-height:14px;color:#1a1a1a;">Connection</div>
<div class="t" style="left:891px;top:274.84px;font-size:12px;line-height:14px;color:#1a1a1a;">Setup</div>
<div class="t" style="left:935px;top:274.84px;font-size:12px;line-height:14px;color:#1a1a1a;">Display</div>
<div class="t" style="left:988px;top:274.84px;font-size:12px;line-height:14px;color:#1a1a1a;">View</div>
<div class="a" style="left:743px;top:292px;width:248px;height:1px;background:#e3e3e3;"></div>
<div class="a" style="left:743px;top:293px;width:232px;height:25px;background:#f0f0f0;"></div>
<div class="a" style="left:975px;top:293px;width:16px;height:25px;background:#ffffff;"></div>
<div class="a" style="left:743px;top:318px;width:248px;height:1px;background:#6a6a6a;"></div>
<div class="a" style="left:745px;top:319px;width:246px;height:451px;background:#b9d1ea;"></div>
<div class="a" style="left:745px;top:320px;width:1px;height:449px;background:#fff;"></div>
<div class="a" style="left:745px;top:319px;width:246px;height:1px;background:#555;"></div>
<div class="a" style="left:745px;top:320px;width:246px;height:31px;background:linear-gradient(180deg,#93aed0,#b9cfe6)"></div>
<div class="t" style="left:774px;top:331.84px;font-size:12px;line-height:14px;color:#111;transform:scaleX(0.95);transform-origin:left center;">Mbslave1</div>
<div class="a" style="left:752px;top:350px;width:239px;height:412px;background:#7a7a7a;"></div>
<div class="a" style="left:754px;top:352px;width:237px;height:406px;background:#ffffff;"></div>
<div class="a" style="left:755px;top:387px;width:2px;height:371px;background:#6d6d6d;"></div>
<div class="a" style="left:755px;top:758px;width:236px;height:4px;background:#e6e6e6;"></div>
<div class="a" style="left:755px;top:759px;width:236px;height:1px;background:#fafafa;"></div>
<div class="a" style="left:754px;top:762px;width:237px;height:1px;background:#ffffff;"></div>
<div class="a" style="left:744px;top:768px;width:247px;height:2px;background:#3ed8ee;"></div>
<div class="a" style="left:744px;top:770px;width:247px;height:1px;background:#111;"></div>
<div class="a" style="left:744px;top:771px;width:247px;height:155px;background:#ababab;"></div>
<div class="t" style="left:754px;top:351.80px;font-size:15px;line-height:18px;color:#111;transform:scaleX(0.97);transform-origin:left center;">ID = 10: F = 03</div>
<div class="a" style="left:757px;top:389px;width:194px;height:223px;background:#a0a0a0;"></div>
<div class="a" style="left:755px;top:387px;width:236px;height:2px;background:#6d6d6d;"></div>
<div class="a" style="left:757px;top:389px;width:193px;height:22px;background:#f0f0f0;"></div>
<div class="a" style="left:757px;top:389px;width:1px;height:21px;background:#ffffff;"></div>
<div class="a" style="left:771px;top:389px;width:1px;height:21px;background:#ffffff;"></div>
<div class="a" style="left:861px;top:389px;width:1px;height:21px;background:#ffffff;"></div>
<div class="a" style="left:757px;top:410px;width:193px;height:1px;background:#6d6d6d;"></div>
<div class="a" style="left:770px;top:388px;width:1px;height:22px;background:#6d6d6d;"></div>
<div class="a" style="left:860px;top:388px;width:1px;height:22px;background:#6d6d6d;"></div>
<div class="t" style="left:458px;width:400px;text-align:right;top:393.84px;font-size:12px;line-height:14px;color:#111;">Name</div>
<div class="t" style="left:549px;width:400px;text-align:right;top:393.84px;font-size:12px;line-height:14px;color:#111;">00000</div>
<div class="a" style="left:757px;top:411px;width:13px;height:19px;background:#f0f0f0;"></div>
<div class="a" style="left:771px;top:411px;width:89px;height:19px;background:#ffffff;"></div>
<div class="a" style="left:861px;top:411px;width:89px;height:19px;background:#0078d7;"></div>
<div class="a" style="left:757px;top:430px;width:193px;height:1px;background:#a0a0a0;"></div>
<div class="a" style="left:770px;top:411px;width:1px;height:20px;background:#6d6d6d;"></div>
<div class="a" style="left:860px;top:411px;width:1px;height:20px;background:#a0a0a0;"></div>
<div class="t" style="left:763px;top:415.84px;font-size:12px;line-height:14px;color:#111;">0</div>
<div class="t" style="left:549px;width:400px;text-align:right;top:415.84px;font-size:12px;line-height:14px;color:#fff;">23.6</div>
<div class="a" style="left:757px;top:431px;width:13px;height:19px;background:#f0f0f0;"></div>
<div class="a" style="left:771px;top:431px;width:89px;height:19px;background:#ffffff;"></div>
<div class="a" style="left:861px;top:431px;width:89px;height:19px;background:#ffffff;"></div>
<div class="a" style="left:757px;top:450px;width:193px;height:1px;background:#a0a0a0;"></div>
<div class="a" style="left:770px;top:431px;width:1px;height:20px;background:#6d6d6d;"></div>
<div class="a" style="left:860px;top:431px;width:1px;height:20px;background:#a0a0a0;"></div>
<div class="t" style="left:763px;top:435.84px;font-size:12px;line-height:14px;color:#111;">1</div>
<div class="t" style="left:549px;width:400px;text-align:right;top:435.84px;font-size:12px;line-height:14px;color:#111;">--</div>
<div class="a" style="left:757px;top:451px;width:13px;height:19px;background:#f0f0f0;"></div>
<div class="a" style="left:771px;top:451px;width:89px;height:19px;background:#ffffff;"></div>
<div class="a" style="left:861px;top:451px;width:89px;height:19px;background:#ffffff;"></div>
<div class="a" style="left:757px;top:470px;width:193px;height:1px;background:#a0a0a0;"></div>
<div class="a" style="left:770px;top:451px;width:1px;height:20px;background:#6d6d6d;"></div>
<div class="a" style="left:860px;top:451px;width:1px;height:20px;background:#a0a0a0;"></div>
<div class="t" style="left:763px;top:455.84px;font-size:12px;line-height:14px;color:#111;">2</div>
<div class="t" style="left:549px;width:400px;text-align:right;top:455.84px;font-size:12px;line-height:14px;color:#111;">0</div>
<div class="a" style="left:757px;top:471px;width:13px;height:19px;background:#f0f0f0;"></div>
<div class="a" style="left:771px;top:471px;width:89px;height:19px;background:#ffffff;"></div>
<div class="a" style="left:861px;top:471px;width:89px;height:19px;background:#ffffff;"></div>
<div class="a" style="left:757px;top:490px;width:193px;height:1px;background:#a0a0a0;"></div>
<div class="a" style="left:770px;top:471px;width:1px;height:20px;background:#6d6d6d;"></div>
<div class="a" style="left:860px;top:471px;width:1px;height:20px;background:#a0a0a0;"></div>
<div class="t" style="left:763px;top:475.84px;font-size:12px;line-height:14px;color:#111;">3</div>
<div class="t" style="left:549px;width:400px;text-align:right;top:475.84px;font-size:12px;line-height:14px;color:#111;">0</div>
<div class="a" style="left:757px;top:491px;width:13px;height:19px;background:#f0f0f0;"></div>
<div class="a" style="left:771px;top:491px;width:89px;height:19px;background:#ffffff;"></div>
<div class="a" style="left:861px;top:491px;width:89px;height:19px;background:#ffffff;"></div>
<div class="a" style="left:757px;top:510px;width:193px;height:1px;background:#a0a0a0;"></div>
<div class="a" style="left:770px;top:491px;width:1px;height:20px;background:#6d6d6d;"></div>
<div class="a" style="left:860px;top:491px;width:1px;height:20px;background:#a0a0a0;"></div>
<div class="t" style="left:763px;top:495.84px;font-size:12px;line-height:14px;color:#111;">4</div>
<div class="t" style="left:549px;width:400px;text-align:right;top:495.84px;font-size:12px;line-height:14px;color:#111;">0</div>
<div class="a" style="left:757px;top:511px;width:13px;height:19px;background:#f0f0f0;"></div>
<div class="a" style="left:771px;top:511px;width:89px;height:19px;background:#ffffff;"></div>
<div class="a" style="left:861px;top:511px;width:89px;height:19px;background:#ffffff;"></div>
<div class="a" style="left:757px;top:530px;width:193px;height:1px;background:#a0a0a0;"></div>
<div class="a" style="left:770px;top:511px;width:1px;height:20px;background:#6d6d6d;"></div>
<div class="a" style="left:860px;top:511px;width:1px;height:20px;background:#a0a0a0;"></div>
<div class="t" style="left:763px;top:515.84px;font-size:12px;line-height:14px;color:#111;">5</div>
<div class="t" style="left:549px;width:400px;text-align:right;top:515.84px;font-size:12px;line-height:14px;color:#111;">0</div>
<div class="a" style="left:757px;top:531px;width:13px;height:19px;background:#f0f0f0;"></div>
<div class="a" style="left:771px;top:531px;width:89px;height:19px;background:#ffffff;"></div>
<div class="a" style="left:861px;top:531px;width:89px;height:19px;background:#ffffff;"></div>
<div class="a" style="left:757px;top:550px;width:193px;height:1px;background:#a0a0a0;"></div>
<div class="a" style="left:770px;top:531px;width:1px;height:20px;background:#6d6d6d;"></div>
<div class="a" style="left:860px;top:531px;width:1px;height:20px;background:#a0a0a0;"></div>
<div class="t" style="left:763px;top:535.84px;font-size:12px;line-height:14px;color:#111;">6</div>
<div class="t" style="left:549px;width:400px;text-align:right;top:535.84px;font-size:12px;line-height:14px;color:#111;">0</div>
<div class="a" style="left:757px;top:551px;width:13px;height:19px;background:#f0f0f0;"></div>
<div class="a" style="left:771px;top:551px;width:89px;height:19px;background:#ffffff;"></div>
<div class="a" style="left:861px;top:551px;width:89px;height:19px;background:#ffffff;"></div>
<div class="a" style="left:757px;top:570px;width:193px;height:1px;background:#a0a0a0;"></div>
<div class="a" style="left:770px;top:551px;width:1px;height:20px;background:#6d6d6d;"></div>
<div class="a" style="left:860px;top:551px;width:1px;height:20px;background:#a0a0a0;"></div>
<div class="t" style="left:763px;top:555.84px;font-size:12px;line-height:14px;color:#111;">7</div>
<div class="t" style="left:549px;width:400px;text-align:right;top:555.84px;font-size:12px;line-height:14px;color:#111;">0</div>
<div class="a" style="left:757px;top:571px;width:13px;height:19px;background:#f0f0f0;"></div>
<div class="a" style="left:771px;top:571px;width:89px;height:19px;background:#ffffff;"></div>
<div class="a" style="left:861px;top:571px;width:89px;height:19px;background:#ffffff;"></div>
<div class="a" style="left:757px;top:590px;width:193px;height:1px;background:#a0a0a0;"></div>
<div class="a" style="left:770px;top:571px;width:1px;height:20px;background:#6d6d6d;"></div>
<div class="a" style="left:860px;top:571px;width:1px;height:20px;background:#a0a0a0;"></div>
<div class="t" style="left:763px;top:575.84px;font-size:12px;line-height:14px;color:#111;">8</div>
<div class="t" style="left:549px;width:400px;text-align:right;top:575.84px;font-size:12px;line-height:14px;color:#111;">0</div>
<div class="a" style="left:757px;top:591px;width:13px;height:19px;background:#f0f0f0;"></div>
<div class="a" style="left:771px;top:591px;width:89px;height:19px;background:#ffffff;"></div>
<div class="a" style="left:861px;top:591px;width:89px;height:19px;background:#ffffff;"></div>
<div class="a" style="left:757px;top:610px;width:193px;height:1px;background:#a0a0a0;"></div>
<div class="a" style="left:770px;top:591px;width:1px;height:20px;background:#6d6d6d;"></div>
<div class="a" style="left:860px;top:591px;width:1px;height:20px;background:#a0a0a0;"></div>
<div class="t" style="left:763px;top:595.84px;font-size:12px;line-height:14px;color:#111;">9</div>
<div class="t" style="left:549px;width:400px;text-align:right;top:595.84px;font-size:12px;line-height:14px;color:#111;">0</div>
<div class="a" style="left:757px;top:430px;width:14px;height:1px;background:#6d6d6d;"></div>
<svg style="left:752px;top:249px" width="12" height="13" viewBox="0 0 12 13"><rect x="1" y="1" width="3" height="2" fill="#fff"/><rect x="2" y="1" width="1" height="1" fill="#1c1"/><rect x="4" y="1" width="4" height="1" fill="#00f"/><rect x="9" y="1" width="2" height="1" fill="#1e1"/><rect x="9" y="2" width="2" height="1" fill="#fff"/><rect x="9" y="5" width="2" height="1" fill="#fff"/><rect x="9" y="6" width="2" height="1" fill="#1e1"/><rect x="9" y="10" width="2" height="1" fill="#fff"/><rect x="9" y="11" width="2" height="1" fill="#1e1"/><rect x="1" y="8" width="3" height="2" fill="#fff"/><rect x="2" y="9" width="1" height="1" fill="#0b0b0b"/></svg>
<div class="a" style="left:745px;top:296px;width:1.5px;height:1.5px;background:#9a9a9a;"></div>
<div class="a" style="left:745px;top:300px;width:1.5px;height:1.5px;background:#9a9a9a;"></div>
<div class="a" style="left:745px;top:304px;width:1.5px;height:1.5px;background:#9a9a9a;"></div>
<div class="a" style="left:745px;top:308px;width:1.5px;height:1.5px;background:#9a9a9a;"></div>
<div class="a" style="left:745px;top:312px;width:1.5px;height:1.5px;background:#9a9a9a;"></div>
<svg style="left:755px;top:297px" width="12" height="14" viewBox="0 0 12 14"><path d="M0.5 0.5H8L11.5 4V13.5H0.5Z" fill="#fff" stroke="#000"/><path d="M8 0.5V4H11.5" fill="none" stroke="#000"/></svg>
<svg style="left:776px;top:297px" width="16" height="14" viewBox="0 0 16 14"><path d="M0.5 4.5H6L7 6H12.5V13.5H0.5Z" fill="#f5f07a" stroke="#000"/><path d="M0.5 13.5L3.5 8.5H15.5L12.5 13.5Z" fill="#808000" stroke="#000"/><path d="M9 3Q11 0 14 2L13 4" fill="none" stroke="#000"/></svg>
<svg style="left:799px;top:297px" width="14" height="14" viewBox="0 0 14 14"><rect x="0.5" y="0.5" width="13" height="13" fill="#808000" stroke="#000"/><rect x="3" y="1" width="8" height="5" fill="#fff"/><rect x="3" y="9" width="8" height="5" fill="#000"/><rect x="8" y="10" width="2" height="3" fill="#fff"/></svg>
<svg style="left:821px;top:297px" width="16" height="14" viewBox="0 0 16 14"><path d="M4.5 0.5H13.5V5.5H4.5Z" fill="#fff" stroke="#000"/><path d="M6 2.5H12M6 4H12" stroke="#000" stroke-width=".6"/><path d="M1.5 5.5H14.5L15.5 8.5V12.5H0.5V8.5Z" fill="#fff" stroke="#000"/><path d="M0.5 9.5H15.5" stroke="#000"/><rect x="8" y="10.5" width="4" height="1" fill="#e0d000"/><path d="M2 13.5H14" stroke="#000"/></svg>
<div class="a" style="left:843px;top:296px;width:1px;height:20px;background:#a0a0a0;"></div>
<svg style="left:850px;top:297px" width="13" height="15" viewBox="0 0 13 15"><rect x="0.5" y="0.5" width="12" height="14" fill="#fff" stroke="#9a9a9a"/><rect x="1" y="1" width="11" height="3" fill="#0a1a9c"/><rect x="8" y="2" width="2" height="1" fill="#fff"/><path d="M3 7.5H10M3 9.5H10M3 11.5H10" stroke="#d0d0d0"/></svg>
<div class="a" style="left:872px;top:296px;width:1px;height:20px;background:#a0a0a0;"></div>
<svg style="left:879px;top:297px" width="16" height="15" viewBox="0 0 16 15"><rect x="3.5" y="0.5" width="9" height="8" fill="#fff" stroke="#000"/><path d="M5 3.5H11M5 5.5H11" stroke="#000"/><path d="M6 9H10V11H6Z" fill="#000"/><path d="M0.5 14V12.5H3.5M12.5 12.5H15.5V14" stroke="#000" fill="none"/></svg>
<svg style="left:902px;top:297px" width="16" height="15" viewBox="0 0 16 15"><rect x="5.5" y="0.5" width="5" height="3" fill="none" stroke="#b4b4b4"/><rect x="2.5" y="3.5" width="11" height="9" rx="2" fill="none" stroke="#b4b4b4"/><path d="M5 6.5H11M5 8.5H11" stroke="#b4b4b4"/><path d="M0 13.5H16" stroke="#b4b4b4"/></svg>
<div class="a" style="left:924px;top:296px;width:1px;height:20px;background:#a0a0a0;"></div>
<svg style="left:934px;top:297px" width="11" height="15" viewBox="0 0 11 15"><path d="M1.5 4Q1.5 0.8 5.5 0.8Q9.5 0.8 9.5 4Q9.5 6 7 7.2Q6 7.8 6 9.5H4.5Q4.5 7 6.5 6Q7.5 5.3 7.2 4Q7 2.5 5.5 2.5Q3.8 2.5 3.8 4Z" fill="#ff0" stroke="#000" stroke-width="0.9"/><rect x="4" y="11" width="3" height="3" fill="#ff0" stroke="#000" stroke-width="0.9"/></svg>
<svg style="left:954px;top:297px" width="17" height="15" viewBox="0 0 17 15"><path d="M0.5 0.5V11L3 8.5L5.5 14L7.5 13L5 7.5H8.5Z" fill="#000"/><path d="M8 3.5Q8 0.5 12 0.5Q16 0.5 16 3.5Q16 5.5 13.5 6.5Q12.7 7 12.7 8.5H11Q11 6.3 12.7 5.4Q13.8 4.8 13.8 3.6Q13.8 2.2 12.2 2.2Q10.3 2.2 10.3 3.5Z" fill="#1a1a8a"/><rect x="11" y="10" width="2.5" height="2.5" fill="#1a1a8a"/></svg>
<div class="a" style="left:974px;top:293px;width:1px;height:25px;background:#a0a0a0;"></div>
<svg style="left:754px;top:330px" width="16" height="16" viewBox="0 0 16 16"><path d="M0.5 0.5H14.5V11.5L13.5 12.5V13.5H10.5V14.5H8.5V13.5H6.5V14.5H3.5V13.5H0.5Z" fill="#fff" stroke="#111"/><text x="7.5" y="6" font-size="5.5" font-weight="bold" text-anchor="middle" fill="#f00" font-family="Liberation Mono" letter-spacing="0.3">DOC</text><path d="M3 8.5H13M3 10.5H12" stroke="#aaa" stroke-width="0.8"/><rect x="14" y="12" width="1.5" height="1.5" fill="#2a8a8a"/></svg>
<div class="a" style="left:0px;top:5px;width:3px;height:921px;background:#5c6a99;"></div>
</body></html>
